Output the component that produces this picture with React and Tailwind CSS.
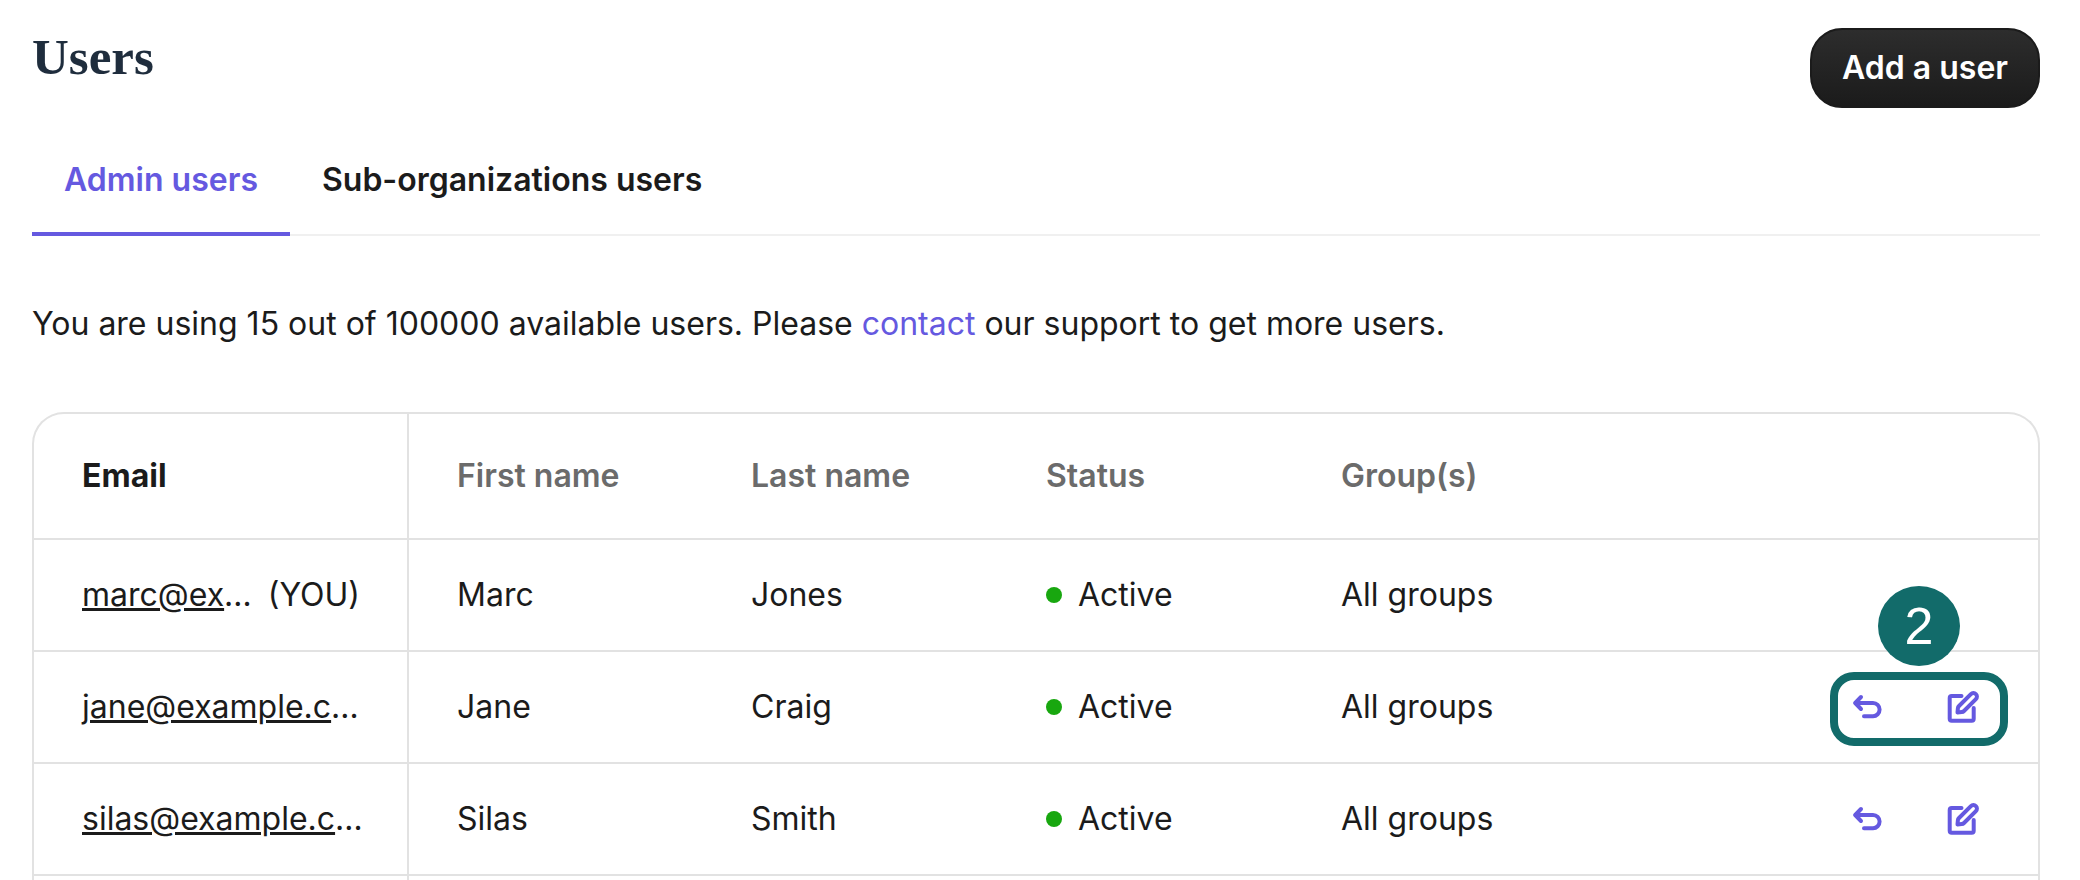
import React, { useState } from 'react';

const tabs = ['Admin users', 'Sub-organizations users'];

const users = [
  { id: 1, email: 'marc@example.com', firstName: 'Marc', lastName: 'Jones', status: 'Active', groups: 'All groups', isYou: true },
  { id: 2, email: 'jane@example.com', firstName: 'Jane', lastName: 'Craig', status: 'Active', groups: 'All groups', step: 2 },
  { id: 3, email: 'silas@example.com', firstName: 'Silas', lastName: 'Smith', status: 'Active', groups: 'All groups' },
];

// The current user's email is cut shorter to leave room for the (YOU) label
const shortenEmail = (user) => {
  if (user.isYou) {
    return user.email.slice(0, 7);
  }
  return user.email.replace(/om$/, '');
};

const UndoIcon = () => (
  <svg className="size-8" viewBox="0 0 32 32" fill="none" stroke="currentColor" strokeWidth="4" strokeLinecap="round" strokeLinejoin="round" aria-hidden="true">
    <path d="M10 6 4.2 12l5.8 6" />
    <path d="M4.5 12H22a6.5 6.5 0 0 1 0 13.2H13" />
  </svg>
);

const EditIcon = () => (
  <svg className="size-8" viewBox="0 0 32 32" fill="none" stroke="currentColor" strokeWidth="4" strokeLinecap="round" strokeLinejoin="round" aria-hidden="true">
    <path d="M14.5 5H4.7a2 2 0 0 0-2 2v20.7a2 2 0 0 0 2 2h20a2 2 0 0 0 2-2V17" />
    <path d="M23.9 3.1 12 15q-1 1-1.1 2.2l-.4 4.3 4.3-.4q1.2-.1 2.2-1.1L28.9 8.1a3.5 3.5 0 0 0-5-5Z" />
  </svg>
);

// Numbered marker drawn over the row actions
const StepCallout = ({ number }) => (
  <div className="pointer-events-none absolute right-[-29px] bottom-[-23px] flex w-[178px] flex-col items-center gap-1.5">
    <span className="flex h-20 w-[82px] items-center justify-center rounded-[50%] bg-[#126b6a] font-['Liberation_Sans',sans-serif] text-[52px] leading-none text-white">
      {number}
    </span>
    <span className="h-[74px] w-full rounded-3xl border-8 border-[#126b6a]" />
  </div>
);

const App = () => {
  const [activeTab, setActiveTab] = useState(tabs[0]);

  return (
    <div className="h-screen overflow-hidden bg-white pr-10 pl-8 font-['Inter',sans-serif] text-[32px] leading-12 text-[#1b1b1b]">
      {/* Title */}
      <div className="flex items-start justify-between pt-7">
        <h1 className="font-['Liberation_Serif',serif] text-[51px] leading-[58px] font-bold text-[#1f2d3d]">Users</h1>
        <button className="h-20 rounded-[32px] border-2 border-[#1b1b1b] bg-linear-to-b from-[#2d2d2d] to-[#1b1b1b] px-[30px] font-semibold text-white">
          Add a user
        </button>
      </div>

      {/* Tabs */}
      <div className="mt-7 flex shadow-[inset_0_-2px_0_#f0f0f0]" role="tablist">
        {tabs.map((tab) => (
          <button
            key={tab}
            role="tab"
            aria-selected={tab === activeTab}
            onClick={() => setActiveTab(tab)}
            className={`h-[100px] border-b-4 px-8 pb-2 font-semibold ${tab === activeTab ? 'border-[#6559e0] text-[#6559e0]' : 'border-transparent'}`}
          >
            {tab}
          </button>
        ))}
      </div>

      <p className="mt-16">
        You are using 15 out of 100000 available users. Please <a href="#contact" className="text-[#6559e0]">contact</a> our support to get more users.
      </p>

      {/* Table */}
      <div className="mt-16 rounded-t-[32px] border-2 border-b-0 border-[#e2e2e2]">
        <table className="w-full table-fixed text-left">
          <thead>
            <tr className="h-[125px] border-b-2 border-[#e2e2e2] text-[#6b6b6b]">
              <th className="w-[374px] border-r-2 border-[#e2e2e2] px-12 font-bold text-[#1b1b1b]">Email</th>
              <th className="w-[295px] px-12 font-semibold">First name</th>
              <th className="w-[295px] px-12 font-semibold">Last name</th>
              <th className="w-[295px] px-12 font-semibold">Status</th>
              <th className="px-12 font-semibold">Group(s)</th>
              <th className="w-[295px]" aria-label="Actions"></th>
            </tr>
          </thead>
          <tbody>
            {users.map((user) => (
              <tr key={user.id} className="h-28 border-b-2 border-[#e2e2e2]">
                <td className="border-r-2 border-[#e2e2e2] pr-10 pl-12">
                  <div className="flex gap-4 whitespace-nowrap">
                    <span>
                      <a href={`mailto:${user.email}`} className="underline decoration-3 underline-offset-2">{shortenEmail(user)}</a>…
                    </span>
                    {user.isYou && <span>(YOU)</span>}
                  </div>
                </td>
                <td className="px-12">{user.firstName}</td>
                <td className="px-12">{user.lastName}</td>
                <td className="px-12">
                  <div className="flex items-center gap-4">
                    <span className="size-4 rounded-full bg-[#18a70f]" />
                    {user.status}
                  </div>
                </td>
                <td className="px-12">{user.groups}</td>
                <td className="pr-[59px]">
                  {!user.isYou && (
                    <div className="relative ml-auto flex w-fit gap-16 text-[#6559e0]">
                      <button aria-label="Reset"><UndoIcon /></button>
                      <button aria-label="Edit"><EditIcon /></button>
                      {user.step && <StepCallout number={user.step} />}
                    </div>
                  )}
                </td>
              </tr>
            ))}
            <tr className="h-28">
              <td className="border-r-2 border-[#e2e2e2]"></td>
              <td colSpan="5"></td>
            </tr>
          </tbody>
        </table>
      </div>
    </div>
  );
};

export default App;
